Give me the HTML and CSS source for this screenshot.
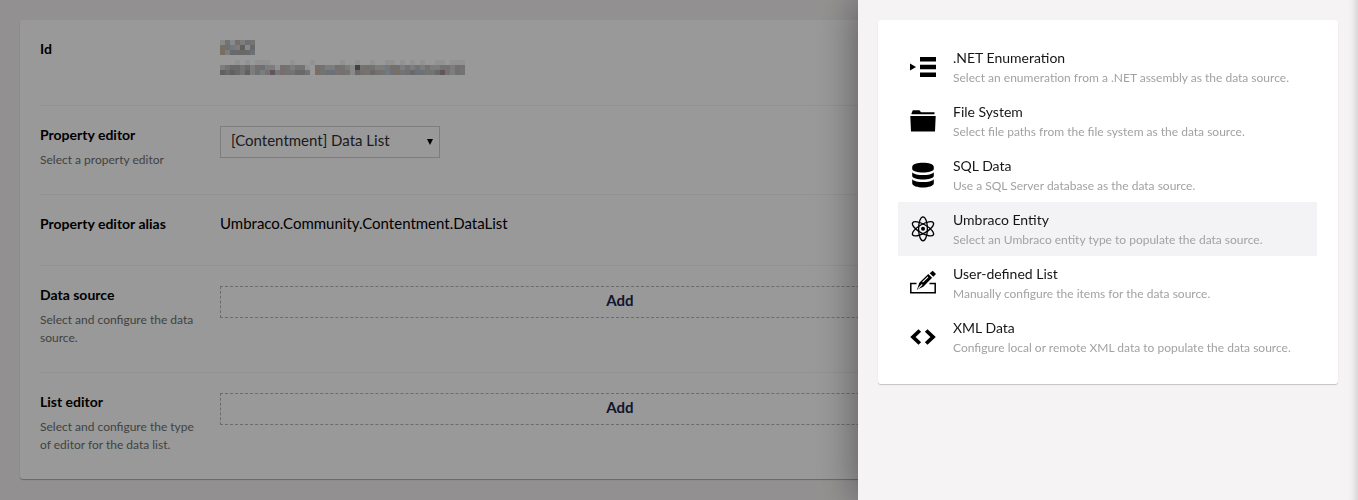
FILE: index.html
```
<!DOCTYPE html>
<html lang="en">
<head>
<meta charset="utf-8">
<title>Data type</title>
<link rel="stylesheet" href="styles.css">
</head>
<body>
<main class="workspace">
  <section class="box">
    <div class="row row-id">
      <div class="label"><h2>Id</h2></div>
      <div class="control"><svg class="redacted" width="245" height="35" shape-rendering="crispEdges"></svg></div>
    </div>
    <div class="row row-editor">
      <div class="label"><h2>Property editor</h2><p>Select a property editor</p></div>
      <div class="control"><div class="select"><span>[Contentment] Data List</span><svg width="6" height="6" viewBox="0 0 6 6"><path d="M0 0h6L3 6z"/></svg></div></div>
    </div>
    <div class="row row-alias">
      <div class="label"><h2>Property editor alias</h2></div>
      <div class="control"><div class="alias">Umbraco.Community.Contentment.DataList</div></div>
    </div>
    <div class="row row-source">
      <div class="label"><h2>Data source</h2><p>Select and configure the data source.</p></div>
      <div class="control"><div class="add">Add</div></div>
    </div>
    <div class="row row-list">
      <div class="label"><h2>List editor</h2><p>Select and configure the type of editor for the data list.</p></div>
      <div class="control"><div class="add">Add</div></div>
    </div>
  </section>
</main>
<div class="backdrop"></div>
<aside class="drawer">
  <ul class="options">
    <li class="option">
      <svg class="icon" viewBox="0 0 26 26"><path d="M0 9.500l6 3.500-6 3.500zM10 3h16v4.500H10zM10 10.800h16v4.500H10zM10 18.500h16V23H10z"/></svg>
      <div><h3>.NET Enumeration</h3><p>Select an enumeration from a .NET assembly as the data source.</p></div>
    </li>
    <li class="option">
      <svg class="icon" viewBox="0 0 26 26"><path d="M1.500 5.200L2.800 2.300H9.500l1.500 2H24.500V6.300H1.500zM.3 7.900h25.400L25 23.500H1z"/></svg>
      <div><h3>File System</h3><p>Select file paths from the file system as the data source.</p></div>
    </li>
    <li class="option">
      <svg class="icon" viewBox="0 0 26 26"><path d="M2.200 4.800C2.200-.7 23.800-.7 23.800 4.800V7c0 4.600-21.600 4.600-21.600 0zM2.200 10.200c3 3.800 18.600 3.800 21.600 0v3.600c0 5-21.600 5-21.600 0zM2.200 17.200c3 3.800 18.600 3.800 21.600 0v4c0 5.600-21.600 5.600-21.600 0z"/></svg>
      <div><h3>SQL Data</h3><p>Use a SQL Server database as the data source.</p></div>
    </li>
    <li class="option selected">
      <svg class="icon" viewBox="0 0 26 26"><g fill="none" stroke="#000" stroke-width="1.300"><ellipse cx="13" cy="12.800" rx="4.400" ry="12"/><ellipse cx="13" cy="12.800" rx="4.400" ry="12" transform="rotate(60 13 12.800)"/><ellipse cx="13" cy="12.800" rx="4.400" ry="12" transform="rotate(-60 13 12.800)"/></g><circle cx="13" cy="12.800" r="2"/></svg>
      <div><h3>Umbraco Entity</h3><p>Select an Umbraco entity type to populate the data source.</p></div>
    </li>
    <li class="option">
      <svg class="icon" viewBox="0 0 26 26"><path d="M6.500 13.500H.8v9.300h24.400v-9.300h-5.700" fill="none" stroke="#000" stroke-width="1.500"/><path d="M7 19.800l2.300-7L18.300 4l3.800 3.800-8.800 9z"/><path d="M8.200 18.600l4-4.200M12.600 12.200L18 6.800" fill="none" stroke="#fff" stroke-width="1.100"/><path d="M19.700 3.200L22.700.8 26 4.100 23.300 6.800z"/></svg>
      <div><h3>User-defined List</h3><p>Manually configure the items for the data source.</p></div>
    </li>
    <li class="option">
      <svg class="icon" viewBox="0 0 26 26"><path d="M9.800 6.500L3 13l6.800 6.500M16.200 6.500L23 13l-6.800 6.500" fill="none" stroke="#000" stroke-width="3.800"/></svg>
      <div><h3>XML Data</h3><p>Configure local or remote XML data to populate the data source.</p></div>
    </li>
  </ul>
</aside>
<script src="redacted.js"></script>
</body>
</html>
```
FILE: styles.css
```
* { box-sizing: border-box; }
body { margin: 0; height: 500px; overflow: hidden; background: #f6f1f2; color: #000; font-family: Lato, sans-serif; }
h2, h3, p, ul { margin: 0; padding: 0; }
.workspace { padding: 20px; }
.box { height: 459px; padding: 0 20px; background: #fff; border-radius: 3px; box-shadow: 0 1px 1px rgba(0,0,0,.3); }
.row { display: flex; padding-top: 20px; border-bottom: 1px solid #f3f3f5; }
.row:last-child { border-bottom: 0; }
.row-id { height: 86px; }
.row-editor { height: 89px; }
.row-alias { height: 71px; }
.row-source { height: 107px; }
.row-list { height: 106px; }
.label { width: 160px; margin-right: 20px; }
.label h2 { font-size: 14px; line-height: 18px; font-weight: 700; }
.label p { margin-top: 7px; font-size: 12px; line-height: 18px; color: #6c6f6e; }
.control { flex: 1; }
.redacted { display: block; }
.select { display: flex; align-items: center; justify-content: space-between; width: 220px; height: 32px; padding: 0 6px 4px 10px; border: 1px solid #d0d0d0; font-size: 15px; color: #303033; }
.select svg { margin-top: 4px; }
.alias { font-size: 15px; line-height: 16px; }
.add { width: 800px; height: 32px; border: 1px dashed #b5b5b8; text-align: center; font-size: 15px; line-height: 26px; font-weight: 700; color: #1b264f; }
.backdrop { position: fixed; inset: 0; background: rgba(0,0,0,.4); }
.drawer { position: fixed; top: 0; right: 0; bottom: 0; width: 500px; padding: 20px; background: #f5f3f4; box-shadow: 0 0 40px rgba(0,0,0,.45), inset -10px 0 10px -9px rgba(0,0,0,.2); }
.options { height: 364px; padding: 20px 21px 20px 20px; background: #fff; border-radius: 3px; box-shadow: 0 1px 1px rgba(0,0,0,.2); list-style: none; }
.option { display: flex; height: 54px; padding: 9px 12px; }
.option.selected { background: #f3f3f5; }
.icon { width: 26px; height: 26px; margin: 5px 17px 0 0; }
.option h3 { margin-bottom: 2px; font-size: 14px; line-height: 17px; font-weight: 400; color: #161616; }
.option p { font-size: 12px; line-height: 20px; color: #a2a2a4; white-space: nowrap; }
```
FILE: redacted.js
```
// Mosaic over the identifier: 5px cells, one palette letter per cell.
const palette = {
  a: '#f4f4f5', b: '#e4e5e5', c: '#d0d0d1', d: '#c0c0c1', e: '#b0b0b0', f: '#a0a09d',
  r: '#c9b8b5', m: '#a39097', s: '#bfcbd4', t: '#c8b9a2', u: '#b4bcc6', k: '#756c6b'
};
const rows = [
  'bdbrcud',
  'tuscfbe',
  'tceeeeu',
  '   a a aaa    a   a     a  a  a  aa a a a  aa aaa',
  'cdeedecruccardcdda rdccrdcbkdrdccstucdcdcdccddcrd',
  'fefedfcucdmsrddeed tduudrdberderdsutdueuuddemdcud'
];
const svg = document.querySelector('.redacted');
rows.forEach((row, line) => {
  const y = line < 3 ? line * 5 : line * 5 + 5;
  [...row].forEach((key, column) => {
    if (!palette[key]) return;
    const cell = document.createElementNS('http://www.w3.org/2000/svg', 'rect');
    cell.setAttribute('x', column * 5);
    cell.setAttribute('y', y);
    cell.setAttribute('width', 5);
    cell.setAttribute('height', 5);
    cell.setAttribute('fill', palette[key]);
    svg.append(cell);
  });
});
```
